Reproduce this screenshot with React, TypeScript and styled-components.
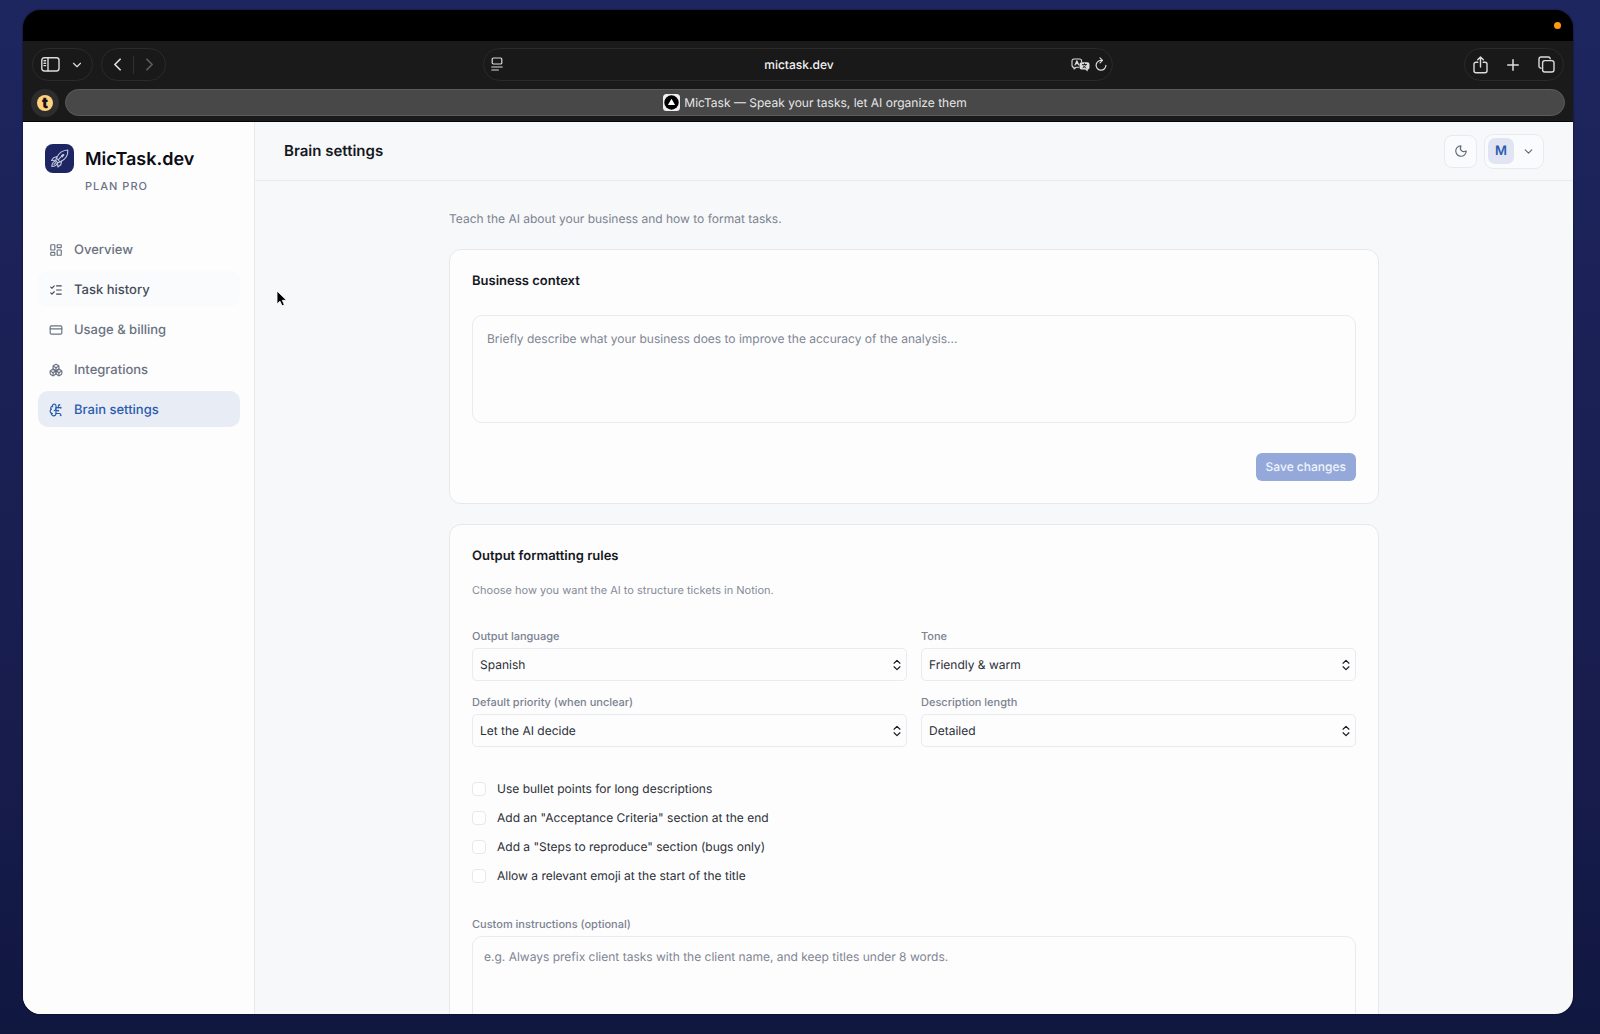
import React from "react";
import styled, { createGlobalStyle } from "styled-components";
import {
  BrainCircuit,
  Boxes,
  ChevronDown,
  ChevronLeft,
  ChevronRight,
  ChevronsUpDown,
  CreditCard,
  LayoutDashboard,
  ListChecks,
  Moon,
  Plus,
} from "lucide-react";

const font = `Inter, "Liberation Sans", sans-serif`;

const Global = createGlobalStyle`
  *, *::before, *::after { box-sizing: border-box; }
  html, body { margin: 0; }
  body {
    font-family: ${font};
    font-size: 12px;
    line-height: 20px;
    color: #1f2328;
    background: #161b49;
    text-rendering: geometricPrecision;
  }
  button, input, select, textarea {
    font: inherit;
    color: inherit;
    margin: 0;
    text-rendering: inherit;
  }
`;

const Desktop = styled.div`
  height: 100vh;
  padding: 10px 27px 20px 23px;
  background: linear-gradient(180deg, #1e2660 0%, #1b2155 35%, #171c4c 75%, #10173f 100%);
`;

const Window = styled.div`
  height: 100%;
  display: flex;
  flex-direction: column;
  overflow: hidden;
  border-radius: 18px;
  background: #1a1a1a;
  box-shadow: 0 0 2px #05081f;
`;

const MenuStrip = styled.div`
  flex: none;
  height: 31px;
  padding: 0 12px;
  display: flex;
  align-items: center;
  justify-content: flex-end;
  background: #000;
`;

const RecordingDot = styled.span`
  width: 7px;
  height: 7px;
  border-radius: 50%;
  background: #ff9a0a;
`;

const Toolbar = styled.div`
  flex: none;
  height: 47px;
  padding: 0 9px;
  display: grid;
  grid-template-columns: 1fr minmax(0, 630px) 1fr;
  align-items: center;
`;

const ToolGroup = styled.div<{ $end?: boolean }>`
  display: flex;
  gap: 8px;
  justify-content: ${(p) => (p.$end ? "flex-end" : "flex-start")};
`;

const Pill = styled.div<{ $gap: number; $pad?: number }>`
  height: 33px;
  padding: 0 ${(p) => p.$pad ?? 8}px;
  display: flex;
  align-items: center;
  gap: ${(p) => p.$gap}px;
  border: 1px solid #2b2b2b;
  border-radius: 17px;
  background: #191919;
`;

const ToolButton = styled.button`
  padding: 0;
  border: 0;
  background: none;
  display: flex;
  color: #dcdcdc;
  &:disabled { color: #5c5c5c; }
`;

const Divider = styled.span`
  width: 1px;
  height: 18px;
  background: #303030;
`;

const AddressBar = styled.div`
  height: 33px;
  padding: 0 5px 0 7px;
  display: grid;
  grid-template-columns: 1fr minmax(0, 2fr) 1fr;
  align-items: center;
  border: 1px solid #2b2b2b;
  border-radius: 17px;
  background: #191919;
`;

const AddressTools = styled.div`
  display: flex;
  justify-content: flex-end;
  align-items: center;
  gap: 5px;
`;

const Address = styled.input`
  min-width: 0;
  border: 0;
  outline: 0;
  background: none;
  color: #f2f2f2;
  font-weight: 500;
  text-align: center;
`;

const TabBar = styled.div`
  flex: none;
  height: 34px;
  padding: 0 8px 4px;
  display: flex;
  align-items: center;
  gap: 6px;
  border-bottom: 1px solid #050505;
`;

const PinnedTab = styled.button`
  width: 28px;
  height: 28px;
  padding: 0;
  border: 0;
  border-radius: 50%;
  display: flex;
  align-items: center;
  justify-content: center;
  background: #2d2d2d;
`;

const PinnedIcon = styled.span`
  width: 16px;
  height: 16px;
  border-radius: 50%;
  background: #ffd27c;
  color: #1b0f24;
  font-size: 15px;
  font-weight: 900;
  line-height: 15px;
  text-align: center;
`;

const ActiveTab = styled.button`
  flex: 1;
  height: 27px;
  padding: 0;
  display: flex;
  align-items: center;
  justify-content: center;
  gap: 4px;
  border: 1px solid #5c5c5c;
  border-radius: 14px;
  background: #484848;
  color: #e6e6e6;
`;

const Page = styled.div`
  flex: 1;
  min-height: 0;
  display: flex;
  background: #f7f8fa;
`;

const Sidebar = styled.aside`
  flex: none;
  width: 232px;
  padding: 22px 14px 22px 15px;
  border-right: 1px solid #e6e9ee;
  background: #fdfdfe;
`;

const Brand = styled.div`
  height: 87px;
  padding-left: 7px;
  display: flex;
  align-items: flex-start;
  gap: 11px;
`;

const BrandText = styled.div`
  display: flex;
  flex-direction: column;
`;

const BrandName = styled.span`
  font-size: 18px;
  font-weight: 600;
  line-height: 31px;
  color: #0a0c14;
`;

const Plan = styled.span`
  font-size: 11px;
  font-weight: 500;
  line-height: 22px;
  letter-spacing: 1px;
  color: #6b7285;
`;

const Nav = styled.nav`
  display: flex;
  flex-direction: column;
  gap: 4px;
`;

const NavLink = styled.a<{ $state?: "hover" | "active" }>`
  height: 36px;
  padding: 1px 11px 0;
  display: flex;
  align-items: center;
  gap: 11px;
  border-radius: 10px;
  font-size: 13px;
  font-weight: 500;
  text-decoration: none;
  color: ${(p) => (p.$state === "active" ? "#2a5cae" : p.$state === "hover" ? "#454b58" : "#6b7280")};
  background: ${(p) => (p.$state === "active" ? "#e8ecf4" : p.$state === "hover" ? "#fafbfd" : "none")};
`;

const Main = styled.main`
  flex: 1;
  min-width: 0;
  display: flex;
  flex-direction: column;
`;

const Header = styled.header`
  flex: none;
  height: 59px;
  padding: 0 29px;
  display: flex;
  align-items: center;
  justify-content: space-between;
  border-bottom: 1px solid #e8eaee;
`;

const Title = styled.h1`
  margin: 0;
  font-size: 15px;
  font-weight: 600;
  line-height: 20px;
  color: #15181f;
`;

const HeaderActions = styled.div`
  display: flex;
  align-items: center;
  gap: 7px;
`;

const ThemeButton = styled.button`
  width: 33px;
  height: 33px;
  padding: 0;
  display: flex;
  align-items: center;
  justify-content: center;
  border: 1px solid #e7eaef;
  border-radius: 8px;
  background: #fafbfc;
  color: #5f6878;
`;

const UserButton = styled.button`
  width: 60px;
  height: 35px;
  padding: 0 8px 0 3px;
  display: flex;
  align-items: center;
  justify-content: space-between;
  border: 1px solid #e7eaef;
  border-radius: 9px;
  background: #fafbfc;
  color: #5f6878;
`;

const Avatar = styled.span`
  width: 26px;
  height: 26px;
  border-radius: 7px;
  background: #e1e5f3;
  color: #2a5cae;
  font-size: 13px;
  font-weight: 600;
  line-height: 26px;
  text-align: center;
`;

const Scroller = styled.div`
  flex: 1;
  min-height: 0;
  overflow: hidden;
  padding: 28px 24px 0;
`;

const Content = styled.div`
  max-width: 930px;
  margin: 0 auto;
  display: flex;
  flex-direction: column;
  gap: 20px;
`;

const Intro = styled.p`
  margin: 0;
  color: #7b8290;
`;

const Card = styled.section`
  padding: 21px 22px 22px;
  border: 1px solid #e5e8ec;
  border-radius: 12px;
  background: #fdfdfe;
`;

const CardTitle = styled.h2`
  margin: 0;
  font-size: 13px;
  font-weight: 600;
  line-height: 20px;
  color: #15181f;
`;

const CardNote = styled.p`
  margin: 14px 0 28px;
  font-size: 11px;
  line-height: 20px;
  color: #858b97;
`;

const TextArea = styled.textarea<{ $roomy?: boolean }>`
  display: block;
  width: 100%;
  height: 108px;
  padding: ${(p) => (p.$roomy ? "13px 14px" : "10px 11px")};
  border: 1px solid #e8ebef;
  border-radius: 10px;
  outline: 0;
  resize: none;
  background: #fdfdfe;
  &::placeholder { color: #7f8592; opacity: 1; }
`;

const ContextField = styled.div`
  padding: 24px 0 30px;
`;

const Actions = styled.div`
  display: flex;
  justify-content: flex-end;
`;

const SaveButton = styled.button`
  height: 28px;
  padding: 0 10px;
  border: 0;
  border-radius: 6px;
  background: #94a9d9;
  color: #f0f4fc;
  font-weight: 500;
`;

const Fields = styled.div`
  display: grid;
  grid-template-columns: 1fr 1fr;
  gap: 13px 14px;
`;

const Field = styled.div`
  display: flex;
  flex-direction: column;
  gap: 4px;
`;

const Label = styled.label`
  font-size: 11px;
  font-weight: 500;
  line-height: 16px;
  color: #7b8290;
`;

const SelectBox = styled.div`
  display: grid;
  align-items: center;
  color: #15181f;
  & > * { grid-area: 1 / 1; }
  & > svg { justify-self: end; margin-right: 3px; pointer-events: none; }
`;

const Select = styled.select`
  width: 100%;
  height: 33px;
  padding: 0 24px 0 7px;
  appearance: none;
  border: 1px solid #e8ebef;
  border-radius: 5px;
  outline: 0;
  background: #fdfdfe;
  color: #2b2f36;
`;

const Checks = styled.div`
  padding: 32px 0 30px;
  display: flex;
  flex-direction: column;
  gap: 9px;
`;

const CheckLabel = styled.label`
  display: flex;
  align-items: center;
  gap: 11px;
  color: #2b2f36;
`;

const Check = styled.input`
  width: 14px;
  height: 14px;
  appearance: none;
  border: 1px solid #e5e8ec;
  border-radius: 4px;
  background: #fff;
`;

const Pointer = styled.svg`
  position: fixed;
  left: 276px;
  top: 290px;
  pointer-events: none;
`;

const line = { fill: "none", stroke: "currentColor", strokeLinecap: "round", strokeLinejoin: "round" } as const;

const SidebarIcon = () => (
  <svg width="19" height="15" viewBox="0 0 19 15" {...line} strokeWidth="1.4">
    <rect x="0.8" y="0.8" width="17.2" height="13.2" rx="2.4" />
    <path d="M7 1v13M3 3.8h1.6M3 6.2h1.6M3 8.6h1.6" />
  </svg>
);

const ReaderIcon = () => (
  <svg width="12" height="15" viewBox="0 0 12 15" {...line} strokeWidth="1.2">
    <rect x="1.2" y="1" width="9.6" height="6" rx="1.2" />
    <path d="M0.8 10h10.4M0.8 13h6.6" />
  </svg>
);

const TranslateIcon = () => (
  <svg width="19" height="14" viewBox="0 0 19 14" {...line} strokeWidth="1.1">
    <path d="M7.6 9.2H5.2L3 11V9.200A2 2 0 0 1 1 7.200V3a2 2 0 0 1 2-2h5.600a2 2 0 0 1 2 2v.6" />
    <path d="M4 7l1.900-4.200L7.800 7M4.700 5.600h2.400" />
    <path d="M10.500 4.200h6a2 2 0 0 1 2 2v3.400a2 2 0 0 1-1.800 2v2l-2.500-2h-3.700a2 2 0 0 1-2-2V6.200a2 2 0 0 1 2-2z" fill="currentColor" stroke="none" />
    <path d="M11.400 6.600h4.200M13.500 5.600v1M12 9.800c1.500-.6 2.400-1.600 2.700-3.100M12.300 7.800c.5 1 1.400 1.700 2.700 2.100" stroke="#191919" strokeWidth="0.9" />
  </svg>
);

const ReloadIcon = () => (
  <svg width="12" height="15" viewBox="0 0 12 15" {...line} strokeWidth="1.2">
    <path d="M6.800 3.400H6A4.900 4.900 0 1 0 10.900 8.300" />
    <path d="M5 0.900L7.500 3.400 5 5.900" />
  </svg>
);

const ShareIcon = () => (
  <svg width="15" height="18" viewBox="0 0 15 18" {...line} strokeWidth="1.4">
    <path d="M4.800 6.200H3A2 2 0 0 0 1 8.200v6.600A2 2 0 0 0 3 16.800h9a2 2 0 0 0 2-2V8.200a2 2 0 0 0-2-2h-1.800" />
    <path d="M7.500 11V1.200M4.700 3.800L7.500 1l2.800 2.800" />
  </svg>
);

const TabsIcon = () => (
  <svg width="17" height="17" viewBox="0 0 17 17" {...line} strokeWidth="1.4">
    <rect x="4.600" y="4.600" width="11.400" height="11.400" rx="2.200" />
    <path d="M3 12.200A2 2 0 0 1 1 10.200V3a2 2 0 0 1 2-2h7.200a2 2 0 0 1 2 1.800" />
  </svg>
);

const SiteIcon = () => (
  <svg width="17" height="17" viewBox="0 0 17 17">
    <rect width="17" height="17" rx="3.500" fill="#f0f0f0" />
    <circle cx="8.500" cy="8.500" r="7.200" fill="#000" />
    <path d="M8.500 4.800l3.600 6.200H4.900z" fill="#fff" />
  </svg>
);

const RocketLogo = () => (
  <svg width="29" height="29" viewBox="0 0 29 29" {...line} stroke="#c3c9de" strokeWidth="1.100">
    <rect width="29" height="29" rx="8" fill="#1d2662" stroke="none" />
    <path d="M11.500 14C13.500 9.500 17.500 6.200 22.800 6c.4 5.300-2.800 9.800-7.800 12z" />
    <path d="M12.300 12.400l-3.800 1.300-2 2.800 4.300-.2M16.600 17.200l-.8 3.600-3 2.200-.2-4.200" />
    <path d="M11.500 14l-.8 2.700 1.900 2 2.400-.7M13.400 15.700l4.200-4.600M10 17.200c-2 .6-3 2.700-3.200 5.300 2.600-.2 4.800-1.200 5.300-3.200M9 20.300l1.700-1.700" />
    <path d="M16.400 11.900l1.800-1.600.7.700-1.600 1.800z" />
  </svg>
);

const navItems = [
  { label: "Overview", Icon: LayoutDashboard },
  { label: "Task history", Icon: ListChecks, state: "hover" as const },
  { label: "Usage & billing", Icon: CreditCard },
  { label: "Integrations", Icon: Boxes },
  { label: "Brain settings", Icon: BrainCircuit, state: "active" as const },
];

const selects = [
  { id: "language", label: "Output language", options: ["Spanish", "English"] },
  { id: "tone", label: "Tone", options: ["Friendly & warm", "Professional"] },
  { id: "priority", label: "Default priority (when unclear)", options: ["Let the AI decide", "Low", "Medium", "High"] },
  { id: "length", label: "Description length", options: ["Detailed", "Short"] },
];

const checks = [
  "Use bullet points for long descriptions",
  'Add an "Acceptance Criteria" section at the end',
  'Add a "Steps to reproduce" section (bugs only)',
  "Allow a relevant emoji at the start of the title",
];

export default function App() {
  return (
    <Desktop>
      <Global />
      <Window>
        <MenuStrip>
          <RecordingDot />
        </MenuStrip>
        <Toolbar>
          <ToolGroup>
            <Pill $gap={10}>
              <ToolButton aria-label="Show sidebar"><SidebarIcon /></ToolButton>
              <ToolButton aria-label="Tab groups"><ChevronDown size={14} /></ToolButton>
            </Pill>
            <Pill $gap={5} $pad={5}>
              <ToolButton aria-label="Back"><ChevronLeft size={21} /></ToolButton>
              <Divider />
              <ToolButton aria-label="Forward" disabled><ChevronRight size={21} /></ToolButton>
            </Pill>
          </ToolGroup>
          <AddressBar>
            <ToolButton aria-label="Reader"><ReaderIcon /></ToolButton>
            <Address aria-label="Address" defaultValue="mictask.dev" />
            <AddressTools>
              <ToolButton aria-label="Translate"><TranslateIcon /></ToolButton>
              <ToolButton aria-label="Reload"><ReloadIcon /></ToolButton>
            </AddressTools>
          </AddressBar>
          <ToolGroup $end>
            <Pill $gap={16}>
              <ToolButton aria-label="Share"><ShareIcon /></ToolButton>
              <ToolButton aria-label="New tab"><Plus size={18} /></ToolButton>
              <ToolButton aria-label="Tab overview"><TabsIcon /></ToolButton>
            </Pill>
          </ToolGroup>
        </Toolbar>
        <TabBar>
          <PinnedTab><PinnedIcon>t</PinnedIcon></PinnedTab>
          <ActiveTab>
            <SiteIcon />
            MicTask — Speak your tasks, let AI organize them
          </ActiveTab>
        </TabBar>
        <Page>
          <Sidebar>
            <Brand>
              <RocketLogo />
              <BrandText>
                <BrandName>MicTask.dev</BrandName>
                <Plan>PLAN PRO</Plan>
              </BrandText>
            </Brand>
            <Nav>
              {navItems.map(({ label, Icon, state }) => (
                <NavLink key={label} href="#" $state={state}>
                  <Icon size={14} />
                  {label}
                </NavLink>
              ))}
            </Nav>
          </Sidebar>
          <Main>
            <Header>
              <Title>Brain settings</Title>
              <HeaderActions>
                <ThemeButton aria-label="Dark theme"><Moon size={14} /></ThemeButton>
                <UserButton aria-label="Account">
                  <Avatar>M</Avatar>
                  <ChevronDown size={13} />
                </UserButton>
              </HeaderActions>
            </Header>
            <Scroller>
              <Content>
                <Intro>Teach the AI about your business and how to format tasks.</Intro>
                <Card>
                  <CardTitle as="label" htmlFor="context">Business context</CardTitle>
                  <ContextField>
                    <TextArea
                      id="context"
                      $roomy
                      placeholder="Briefly describe what your business does to improve the accuracy of the analysis..."
                    />
                  </ContextField>
                  <Actions>
                    <SaveButton>Save changes</SaveButton>
                  </Actions>
                </Card>
                <Card>
                  <CardTitle>Output formatting rules</CardTitle>
                  <CardNote>Choose how you want the AI to structure tickets in Notion.</CardNote>
                  <Fields>
                    {selects.map((s) => (
                      <Field key={s.id}>
                        <Label htmlFor={s.id}>{s.label}</Label>
                        <SelectBox>
                          <Select id={s.id}>
                            {s.options.map((o) => <option key={o}>{o}</option>)}
                          </Select>
                          <ChevronsUpDown size={14} />
                        </SelectBox>
                      </Field>
                    ))}
                  </Fields>
                  <Checks>
                    {checks.map((c) => (
                      <CheckLabel key={c}>
                        <Check type="checkbox" />
                        {c}
                      </CheckLabel>
                    ))}
                  </Checks>
                  <Field>
                    <Label htmlFor="custom">Custom instructions (optional)</Label>
                    <TextArea
                      id="custom"
                      placeholder="e.g. Always prefix client tasks with the client name, and keep titles under 8 words."
                    />
                  </Field>
                </Card>
              </Content>
            </Scroller>
          </Main>
        </Page>
      </Window>
      <Pointer width="12" height="18" viewBox="0 0 12 18">
        <path d="M1 1v13l3-2.800 2 4.600 2.300-1-2-4.500h4.200z" fill="#000" stroke="#fff" strokeWidth="0.800" />
      </Pointer>
    </Desktop>
  );
}
